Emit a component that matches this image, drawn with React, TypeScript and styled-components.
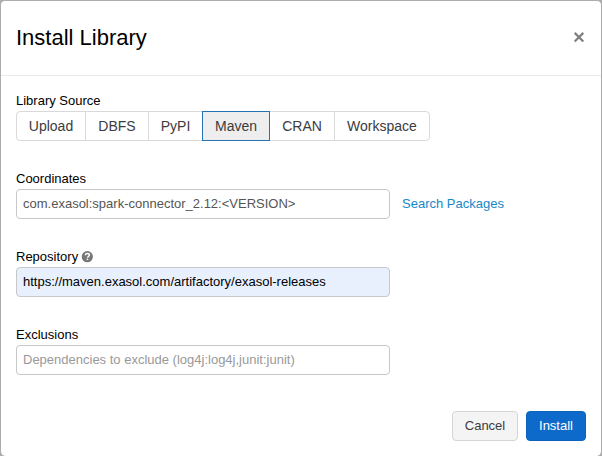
import React from "react";
import styled, { createGlobalStyle, css } from "styled-components";

const GlobalStyle = createGlobalStyle`
  * { box-sizing: border-box; }
  html, body { margin: 0; height: 100%; background: #acacac; overflow: hidden; }
  body, button, input { font-family: "Liberation Sans", Arial, sans-serif; font-size: 13px; }
`;

const Dialog = styled.main`
  display: flex;
  flex-direction: column;
  width: 602px;
  height: 456px;
  border: 1px solid #acacac;
  border-bottom: 0;
  border-radius: 5px;
  background: #fff;
  color: #000;
`;

const Header = styled.header`
  display: flex;
  align-items: center;
  justify-content: space-between;
  height: 75px;
  padding: 0 16px 0 15px;
  border-bottom: 1px solid #e9e9e9;
`;

const Title = styled.h1`
  margin: 0;
  font-size: 22px;
  font-weight: 400;
  line-height: 26px;
`;

const CloseButton = styled.button`
  display: flex;
  padding: 0 0 2px;
  border: 0;
  background: none;
`;

const Content = styled.section`
  display: flex;
  flex: 1;
  flex-direction: column;
  padding: 16px 15px 0;
`;

const Field = styled.div`
  display: flex;
  flex-direction: column;
  height: 78px;
`;

const Label = styled.label`
  display: flex;
  align-items: center;
  gap: 3px;
  height: 19px;
  padding-bottom: 1px;
  line-height: 18px;
`;

const InputRow = styled.div`
  display: flex;
  align-items: center;
  gap: 12px;
`;

const TextInput = styled.input<{ $autofilled?: boolean }>`
  width: 374px;
  height: 30px;
  padding: 0 6px 2px;
  border: 1px solid #c8c8c8;
  border-radius: 4px;
  outline: 0;
  background: ${(p) => (p.$autofilled ? "#e8f0fe" : "#fff")};
  color: ${(p) => (p.$autofilled ? "#000" : "#555")};
  &::placeholder { color: #999; opacity: 1; }
`;

const SearchLink = styled.a`
  color: #1488ca;
  line-height: 18px;
  text-decoration: none;
`;

const SourceGroup = styled.div`
  display: flex;
`;

const SourceButton = styled.button<{ $width: number; $active?: boolean }>`
  width: ${(p) => p.$width}px;
  height: 30px;
  margin-left: -1px;
  padding: 0;
  border: 1px solid #d9d9d9;
  background: #fff;
  color: #3c3c3c;
  font-size: 14px;
  &:first-child { margin-left: 0; border-radius: 4px 0 0 4px; }
  &:last-child { border-radius: 0 4px 4px 0; }
  ${(p) => p.$active && css`
    z-index: 1;
    border-color: #2272b4;
    background: #eee;
  `}
`;

const Footer = styled.footer`
  display: flex;
  justify-content: flex-end;
  gap: 8px;
  height: 45px;
  padding-right: 15px;
`;

const ActionButton = styled.button<{ $primary?: boolean }>`
  width: ${(p) => (p.$primary ? 60 : 66)}px;
  height: 30px;
  padding: 0 0 2px;
  border: 1px solid ${(p) => (p.$primary ? "#0b61bd" : "#d5d5d5")};
  border-radius: 4px;
  background: ${(p) => (p.$primary ? "#0d6aca" : "#f4f4f4")};
  color: ${(p) => (p.$primary ? "#fff" : "#3c3c3c")};
`;

const HelpIcon = () => (
  <svg width="12" height="12" viewBox="0 0 12 12" aria-hidden="true">
    <circle cx="6.3" cy="5.7" r="5.6" fill="#777" />
    <path d="M4.4 4.3C4.5 3 5.3 2.5 6.4 2.5c1.2 0 2 .6 2 1.6 0 1.3-1.7 1.4-1.9 2.6" fill="none" stroke="#fff" strokeWidth="1.5" />
    <path d="M5.7 7.5h1.5v1.4H5.7z" fill="#fff" />
  </svg>
);

const CloseIcon = () => (
  <svg width="12" height="12" viewBox="0 0 12 12" aria-hidden="true">
    <path d="M1.7 1.9l8.6 8.6M10.3 1.9l-8.6 8.6" stroke="#808080" strokeWidth="2.2" />
  </svg>
);

const sources = [
  { name: "Upload", width: 70 },
  { name: "DBFS", width: 64 },
  { name: "PyPI", width: 55 },
  { name: "Maven", width: 68 },
  { name: "CRAN", width: 66 },
  { name: "Workspace", width: 96 },
];

export default function App() {
  return (
    <>
      <GlobalStyle />
      <Dialog role="dialog" aria-labelledby="dialog-title">
        <Header>
          <Title id="dialog-title">Install Library</Title>
          <CloseButton aria-label="Close"><CloseIcon /></CloseButton>
        </Header>
        <Content>
          <Field>
            <Label as="div">Library Source</Label>
            <SourceGroup>
              {sources.map((s) => (
                <SourceButton key={s.name} $width={s.width} $active={s.name === "Maven"}>
                  {s.name}
                </SourceButton>
              ))}
            </SourceGroup>
          </Field>
          <Field>
            <Label htmlFor="coordinates">Coordinates</Label>
            <InputRow>
              <TextInput id="coordinates" spellCheck={false} defaultValue="com.exasol:spark-connector_2.12:<VERSION>" />
              <SearchLink href="#">Search Packages</SearchLink>
            </InputRow>
          </Field>
          <Field>
            <Label htmlFor="repository">Repository <HelpIcon /></Label>
            <TextInput id="repository" $autofilled spellCheck={false} defaultValue="https://maven.exasol.com/artifactory/exasol-releases" />
          </Field>
          <Field>
            <Label htmlFor="exclusions">Exclusions</Label>
            <TextInput id="exclusions" placeholder="Dependencies to exclude (log4j:log4j,junit:junit)" />
          </Field>
        </Content>
        <Footer>
          <ActionButton>Cancel</ActionButton>
          <ActionButton $primary>Install</ActionButton>
        </Footer>
      </Dialog>
    </>
  );
}
